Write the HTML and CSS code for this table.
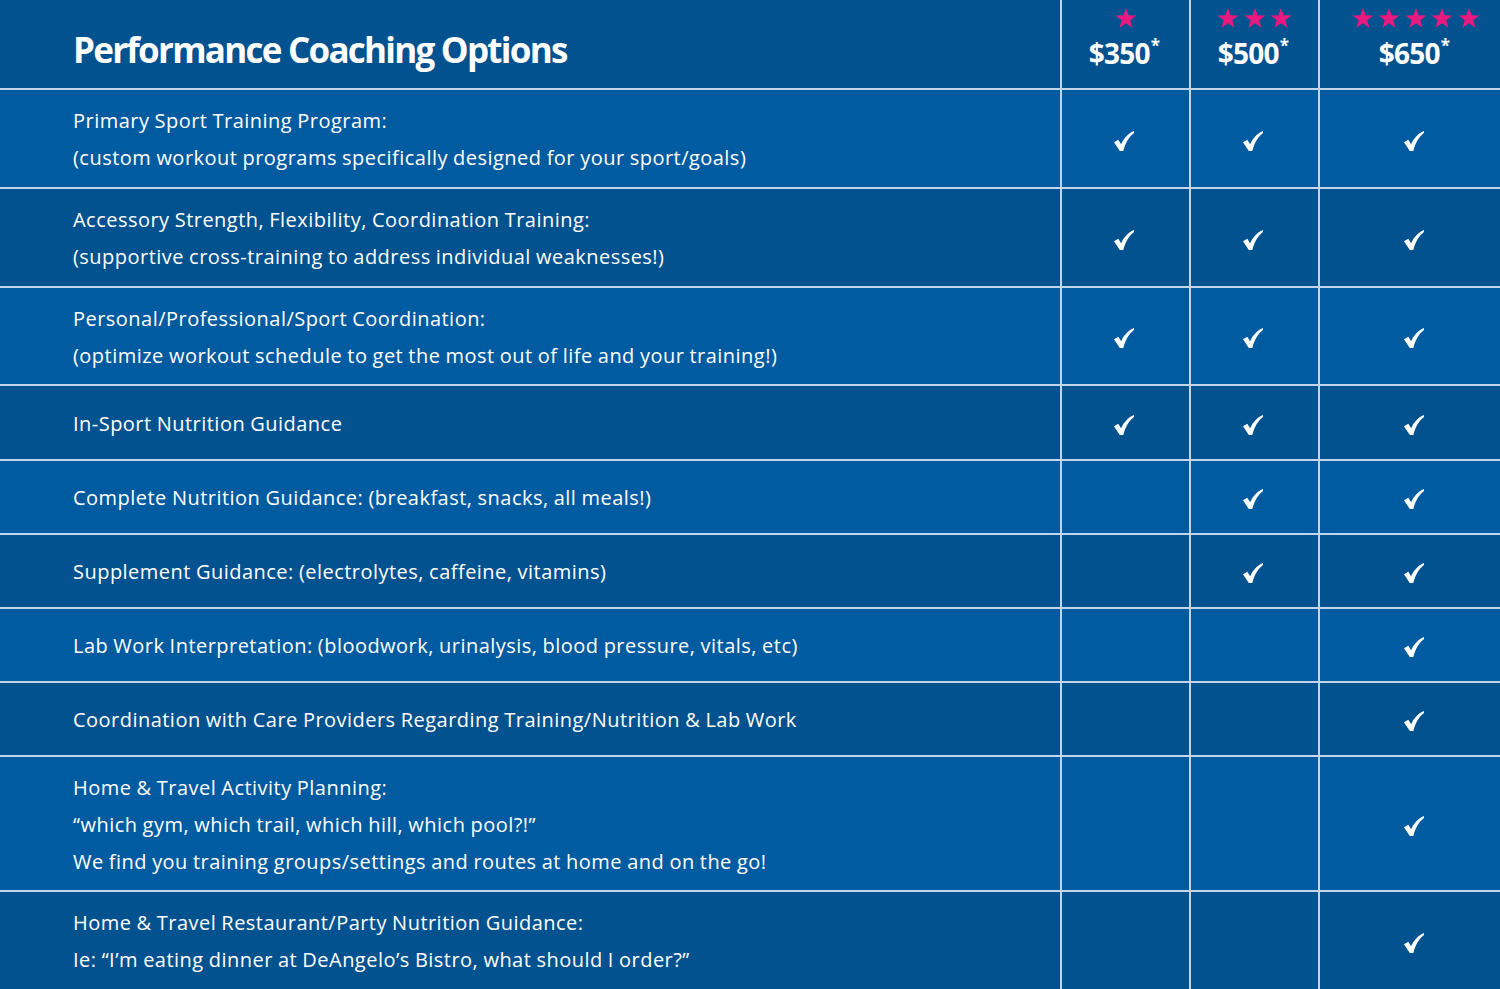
FILE: index.html
```html
<!DOCTYPE html>
<html lang="en">
<head>
<meta charset="utf-8">
<title>Performance Coaching Options</title>
<link rel="stylesheet" href="styles.css">
</head>
<body>
<svg width="0" height="0" class="defs" aria-hidden="true">
  <defs>
    <symbol id="star" viewBox="0 0 24 24"><polygon points="12,1 14.9,8.9 23.4,9.2 16.7,14.4 19.1,22.6 12,17.8 4.9,22.6 7.3,14.4 0.6,9.2 9.1,8.9"/></symbol>
    <symbol id="check" viewBox="0 0 20 20"><path d="M0 11.2 L4.3 8.7 L7.1 13.3 C9.7 7.4 13.9 2.6 20 0 L20 1.9 C15.4 5.3 11.5 11.2 9.3 20 L5.8 20 Z"/></symbol>
  </defs>
</svg>
<div class="wrap">
<table class="plans">
  <colgroup>
    <col class="c-feature"><col class="c-tier"><col class="c-tier"><col class="c-top">
  </colgroup>
  <thead>
    <tr class="head">
      <th class="title">Performance Coaching Options</th>
      <th class="tier">
        <div class="stars"><svg class="star"><use href="#star"/></svg></div>
        <div class="price">$350<sup>*</sup></div>
      </th>
      <th class="tier">
        <div class="stars"><svg class="star"><use href="#star"/></svg><svg class="star"><use href="#star"/></svg><svg class="star"><use href="#star"/></svg></div>
        <div class="price">$500<sup>*</sup></div>
      </th>
      <th class="tier">
        <div class="stars"><svg class="star"><use href="#star"/></svg><svg class="star"><use href="#star"/></svg><svg class="star"><use href="#star"/></svg><svg class="star"><use href="#star"/></svg><svg class="star"><use href="#star"/></svg></div>
        <div class="price">$650<sup>*</sup></div>
      </th>
    </tr>
  </thead>
  <tbody>
    <tr class="light two">
      <td class="feat">Primary Sport Training Program:<br>(custom workout programs specifically designed for your sport/goals)</td>
      <td class="mark"><svg class="check"><use href="#check"/></svg></td>
      <td class="mark"><svg class="check"><use href="#check"/></svg></td>
      <td class="mark"><svg class="check"><use href="#check"/></svg></td>
    </tr>
    <tr class="dark two">
      <td class="feat">Accessory Strength, Flexibility, Coordination Training:<br>(supportive cross-training to address individual weaknesses!)</td>
      <td class="mark"><svg class="check"><use href="#check"/></svg></td>
      <td class="mark"><svg class="check"><use href="#check"/></svg></td>
      <td class="mark"><svg class="check"><use href="#check"/></svg></td>
    </tr>
    <tr class="light two b">
      <td class="feat">Personal/Professional/Sport Coordination:<br>(optimize workout schedule to get the most out of life and your training!)</td>
      <td class="mark"><svg class="check"><use href="#check"/></svg></td>
      <td class="mark"><svg class="check"><use href="#check"/></svg></td>
      <td class="mark"><svg class="check"><use href="#check"/></svg></td>
    </tr>
    <tr class="dark one first">
      <td class="feat">In-Sport Nutrition Guidance</td>
      <td class="mark"><svg class="check"><use href="#check"/></svg></td>
      <td class="mark"><svg class="check"><use href="#check"/></svg></td>
      <td class="mark"><svg class="check"><use href="#check"/></svg></td>
    </tr>
    <tr class="light one">
      <td class="feat">Complete Nutrition Guidance: (breakfast, snacks, all meals!)</td>
      <td class="mark"></td>
      <td class="mark"><svg class="check"><use href="#check"/></svg></td>
      <td class="mark"><svg class="check"><use href="#check"/></svg></td>
    </tr>
    <tr class="dark one">
      <td class="feat">Supplement Guidance: (electrolytes, caffeine, vitamins)</td>
      <td class="mark"></td>
      <td class="mark"><svg class="check"><use href="#check"/></svg></td>
      <td class="mark"><svg class="check"><use href="#check"/></svg></td>
    </tr>
    <tr class="light one">
      <td class="feat">Lab Work Interpretation: (bloodwork, urinalysis, blood pressure, vitals, etc)</td>
      <td class="mark"></td>
      <td class="mark"></td>
      <td class="mark"><svg class="check"><use href="#check"/></svg></td>
    </tr>
    <tr class="dark one">
      <td class="feat">Coordination with Care Providers Regarding Training/Nutrition &amp; Lab Work</td>
      <td class="mark"></td>
      <td class="mark"></td>
      <td class="mark"><svg class="check"><use href="#check"/></svg></td>
    </tr>
    <tr class="light three">
      <td class="feat">Home &amp; Travel Activity Planning:<br>“which gym, which trail, which hill, which pool?!”<br>We find you training groups/settings and routes at home and on the go!</td>
      <td class="mark"></td>
      <td class="mark"></td>
      <td class="mark"><svg class="check"><use href="#check"/></svg></td>
    </tr>
    <tr class="dark two">
      <td class="feat">Home &amp; Travel Restaurant/Party Nutrition Guidance:<br>Ie: “I’m eating dinner at DeAngelo’s Bistro, what should I order?”</td>
      <td class="mark"></td>
      <td class="mark"></td>
      <td class="mark"><svg class="check"><use href="#check"/></svg></td>
    </tr>
  </tbody>
</table>
</div>
</body>
</html>
```

FILE: styles.css
```css
html, body {
  margin: 0;
  padding: 0;
  background: #02528f;
}
body {
  font-family: "Open Sans", "Liberation Sans", sans-serif;
  color: #fff;
  overflow: hidden;
}
.defs {
  position: absolute;
  width: 0;
  height: 0;
}
.wrap {
  width: 1500px;
  overflow: hidden;
}
.plans {
  border-collapse: collapse;
  table-layout: fixed;
  width: 1512px;
}
.c-feature { width: 1061px; }
.c-tier { width: 129px; }
.c-top { width: 193px; }

.plans th, .plans td {
  border: 2px solid #c3d5e8;
  padding: 0;
}
.plans tr:first-child th { border-top: none; }
.plans th:first-child, .plans td:first-child { border-left: none; }

.head { background: #02528f; height: 89px; }
.title {
  text-align: left;
  padding-left: 73px !important;
  padding-top: 11px !important;
  font-size: 35px;
  font-weight: 700;
  letter-spacing: -1.75px;
  line-height: 1;
}
.tier {
  text-align: center;
  vertical-align: top;
}
.stars {
  display: flex;
  justify-content: center;
  gap: 4.5px;
  margin-top: 7px;
  height: 22px;
}
.star {
  width: 22px;
  height: 22px;
  fill: #e8197f;
}
.price {
  font-size: 28px;
  font-weight: 700;
  letter-spacing: -0.8px;
  line-height: 30px;
  margin-top: 9px;
  padding-right: 3px;
}
.price sup {
  font-size: 17px;
  line-height: 0;
  vertical-align: 0;
  position: relative;
  top: -12px;
  margin-left: 1px;
}

.light { background: #015ba1; }
.dark { background: #02528f; }

.feat {
  padding-left: 73px !important;
  font-size: 20px;
  letter-spacing: 0.47px;
  word-spacing: -0.5px;
  line-height: 37px;
  vertical-align: middle;
  padding-top: 1px !important;
}
.one { height: 74px; }
.one.first { height: 75px; }
.two { height: 99px; }
.two.b { height: 98px; }
.three { height: 135px; }

.mark {
  text-align: center;
  vertical-align: middle;
  padding-right: 3px !important;
}
.check {
  width: 20px;
  height: 20px;
  fill: #fff;
  display: inline-block;
  vertical-align: middle;
  position: relative;
  top: 1px;
}
```
